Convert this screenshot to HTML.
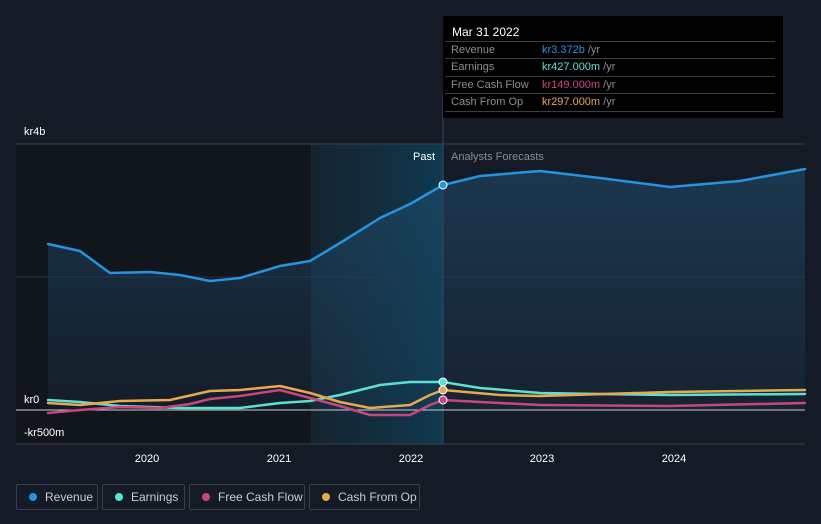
<!DOCTYPE html>
<html><head><style>
body{margin:0;background:#151b26;font-family:"Liberation Sans",sans-serif;}
.w{position:relative;width:821px;height:524px;overflow:hidden;background:#151b26}
.tt{position:absolute;left:443px;top:16px;width:340px;height:102px;background:#000;color:#fff;font-size:11px}
.tt .h{position:absolute;left:9px;top:9px;font-size:12px}
.row{position:absolute;left:2px;width:330px;height:17px;border-top:1px solid #3a3d44;color:#8a8d93}
.row span{position:absolute;left:6px;top:2px}
.row b{position:absolute;left:97px;top:2px;font-weight:normal}
.lg{position:absolute;top:484px;height:26px;border:1px solid #3a3f4a;border-radius:2px;color:#c9ccd2;font-size:12px;box-sizing:border-box;line-height:24px}
.lg i{position:absolute;left:12px;top:8px;width:8px;height:8px;border-radius:50%}
.lg span{position:absolute;left:28px}
</style></head><body><div class="w">
<svg width="821" height="524" style="position:absolute;left:0;top:0">
<defs>
<linearGradient id="hl" x1="0" x2="1"><stop offset="0" stop-color="#15303f" stop-opacity=".4"/><stop offset="1" stop-color="#0e3a50"/></linearGradient>
<linearGradient id="rf" x1="0" y1="0" x2="0" y2="1"><stop offset="0" stop-color="#1f4a6a" stop-opacity=".6"/><stop offset="1" stop-color="#1f4a6a" stop-opacity=".15"/></linearGradient>
</defs>
<rect x="16" y="144" width="295" height="300" fill="#11151c"/>
<rect x="311" y="144" width="132" height="300" fill="url(#hl)"/>
<line x1="16" y1="144" x2="805" y2="144" stroke="#3a3f4a"/>
<line x1="16" y1="277" x2="805" y2="277" stroke="#2a3040"/>
<line x1="16" y1="444" x2="805" y2="444" stroke="#3a3f4a"/>
<line x1="443" y1="94" x2="443" y2="444" stroke="#3a4a5a"/>
<polygon fill="url(#rf)" points="48,244 80,251 110,273 150,272 180,275 210,281 240,278 280,266 310,261 340,243 380,218 410,204 443,185 480,176 540,171 600,178 670,187 740,181 805,169 805,410 48,410"/>
<line x1="16" y1="410" x2="805" y2="410" stroke="#c8ccd2" stroke-width="1"/>
<g fill="none" stroke-width="2.5" stroke-linejoin="round" stroke-linecap="round">
<polyline stroke="#2394df" points="48,244 80,251 110,273 150,272 180,275 210,281 240,278 280,266 310,261 340,243 380,218 410,204 443,185 480,176 540,171 600,178 670,187 740,181 805,169"/>
<polyline stroke="#5ce0d2" points="48,400 80,402 120,406 180,408 240,408 280,403 310,401 340,395 380,385 410,382 443,382 480,388 540,393 600,394 670,395 805,394"/>
<polyline stroke="#c8467e" points="48,413 80,410 120,407 160,408 190,404 210,399 240,396 280,390 310,398 340,406 370,415 410,415 430,405 443,400 480,402 540,405 670,406 805,403"/>
<polyline stroke="#e7a950" points="48,403 80,405 120,401 170,400 210,391 240,390 280,386 310,393 340,402 370,408 410,405 430,395 443,390 500,395 540,396 670,392 805,390"/>
</g>
<g stroke="#fff" stroke-width="1">
<circle cx="443" cy="185" r="4" fill="#2394df"/>
<circle cx="443" cy="382" r="4" fill="#5ce0d2"/>
<circle cx="443" cy="390" r="4" fill="#e7a950"/>
<circle cx="443" cy="400" r="4" fill="#c8467e"/>
</g>
<g font-size="11" fill="#fff" font-family="Liberation Sans">
<text x="24" y="135">kr4b</text>
<text x="24" y="403">kr0</text>
<text x="24" y="436">-kr500m</text>
<text x="147" y="462" text-anchor="middle">2020</text>
<text x="279" y="462" text-anchor="middle">2021</text>
<text x="411" y="462" text-anchor="middle">2022</text>
<text x="542" y="462" text-anchor="middle">2023</text>
<text x="674" y="462" text-anchor="middle">2024</text>
<text x="435" y="160" text-anchor="end">Past</text>
<text x="451" y="160" fill="#8a8d93">Analysts Forecasts</text>
</g>
</svg>
<div class="tt"><div class="h">Mar 31 2022</div>
<div class="row" style="top:25px"><span>Revenue</span><b><span style="position:static;color:#2394df">kr3.372b</span> /yr</b></div>
<div class="row" style="top:42px"><span>Earnings</span><b><span style="position:static;color:#5ce0d2">kr427.000m</span> /yr</b></div>
<div class="row" style="top:60px"><span>Free Cash Flow</span><b><span style="position:static;color:#c8467e">kr149.000m</span> /yr</b></div>
<div class="row" style="top:77px"><span>Cash From Op</span><b><span style="position:static;color:#e7a950">kr297.000m</span> /yr</b></div>
<div class="row" style="top:95px;height:0"></div>
</div>
<div class="lg" style="left:16px;width:82px"><i style="background:#2394df"></i><span>Revenue</span></div>
<div class="lg" style="left:102px;width:83px"><i style="background:#5ce0d2"></i><span>Earnings</span></div>
<div class="lg" style="left:189px;width:116px"><i style="background:#c8467e"></i><span>Free Cash Flow</span></div>
<div class="lg" style="left:309px;width:111px"><i style="background:#e7a950"></i><span>Cash From Op</span></div>
</div></body></html>
